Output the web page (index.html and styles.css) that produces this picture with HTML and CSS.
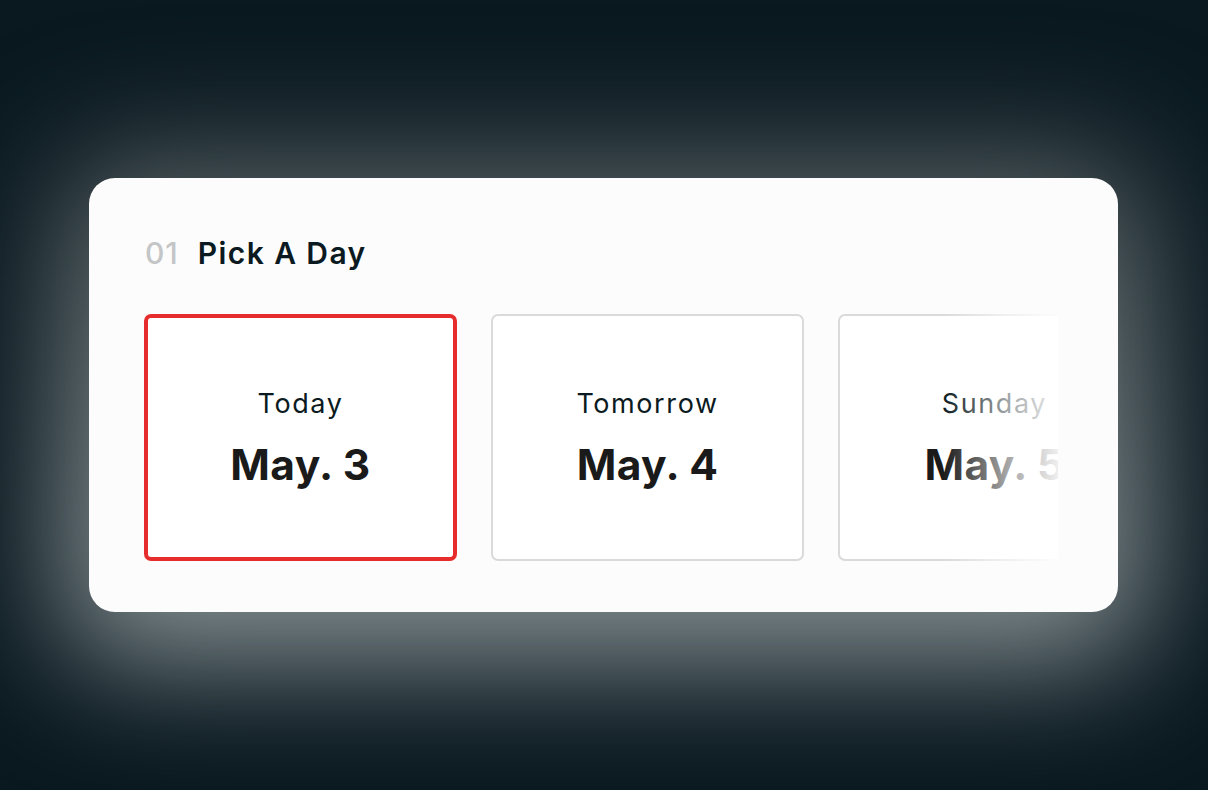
FILE: index.html
```html
<!DOCTYPE html>
<html>
<head>
<meta charset="utf-8">
<link rel="stylesheet" href="styles.css">
</head>
<body>
<main class="stage">
  <section class="panel">
    <h2 class="heading"><span class="step">01</span><span class="title">Pick A Day</span></h2>
    <div class="days">
      <div class="day selected">
        <span class="label">Today</span>
        <span class="date">May. 3</span>
      </div>
      <div class="day">
        <span class="label">Tomorrow</span>
        <span class="date">May. 4</span>
      </div>
      <div class="day">
        <span class="label">Sunday</span>
        <span class="date">May. 5</span>
      </div>
    </div>
  </section>
</main>
</body>
</html>
```

FILE: styles.css
```css
html, body {
  margin: 0;
  padding: 0;
}
body {
  width: 1208px;
  height: 790px;
  overflow: hidden;
  background: #0a1920;
  font-family: Inter, "Noto Sans", sans-serif;
}
.stage {
  height: 790px;
  display: flex;
  justify-content: center;
  padding-top: 178px;
  box-sizing: border-box;
}
.panel {
  position: relative;
  width: 1029px;
  height: 434px;
  margin-left: -1px;
  background: #fcfcfc;
  border-radius: 26px;
  padding: 50px 60px 0 55px;
  box-sizing: border-box;
}
.panel::before {
  content: "";
  position: absolute;
  top: -25px;
  left: -30px;
  right: -30px;
  bottom: -50px;
  border-radius: 60px;
  background: linear-gradient(to bottom, #4c5659 0%, #7a8487 55%, #8c9699 100%);
  filter: blur(62px);
  z-index: -1;
}
.heading {
  margin: 0 0 36px 0;
  display: flex;
  align-items: baseline;
  gap: 19px;
  font-size: 30px;
  line-height: 50px;
  font-weight: 600;
}
.step {
  color: #c3c5c7;
  font-weight: 500;
  letter-spacing: 1px;
  margin-left: 1px;
}
.title {
  color: #0b1a21;
  letter-spacing: 1.4px;
}
.days {
  position: relative;
  display: flex;
  gap: 34px;
  overflow: hidden;
  height: 247px;
}
.days::after {
  content: "";
  position: absolute;
  top: 0;
  bottom: 0;
  right: 0;
  width: 115px;
  background: linear-gradient(to right, rgba(255,255,255,0) 0%, rgba(255,255,255,0.6) 55%, rgba(255,255,255,0.93) 100%);
}
.day {
  flex: 0 0 313px;
  height: 247px;
  box-sizing: border-box;
  border: 2px solid #dadada;
  border-radius: 7px;
  background: #fff;
  display: flex;
  flex-direction: column;
  align-items: center;
  justify-content: center;
}
.day.selected {
  border: 4px solid #e62c2c;
}
.label {
  font-size: 27px;
  color: #0b1a21;
  font-weight: 400;
  line-height: 34px;
  letter-spacing: 1.6px;
}
.date {
  margin-top: 21px;
  font-size: 42.5px;
  line-height: 46px;
  font-weight: 700;
  color: #1a1a1a;
  letter-spacing: 0.4px;
}
```
